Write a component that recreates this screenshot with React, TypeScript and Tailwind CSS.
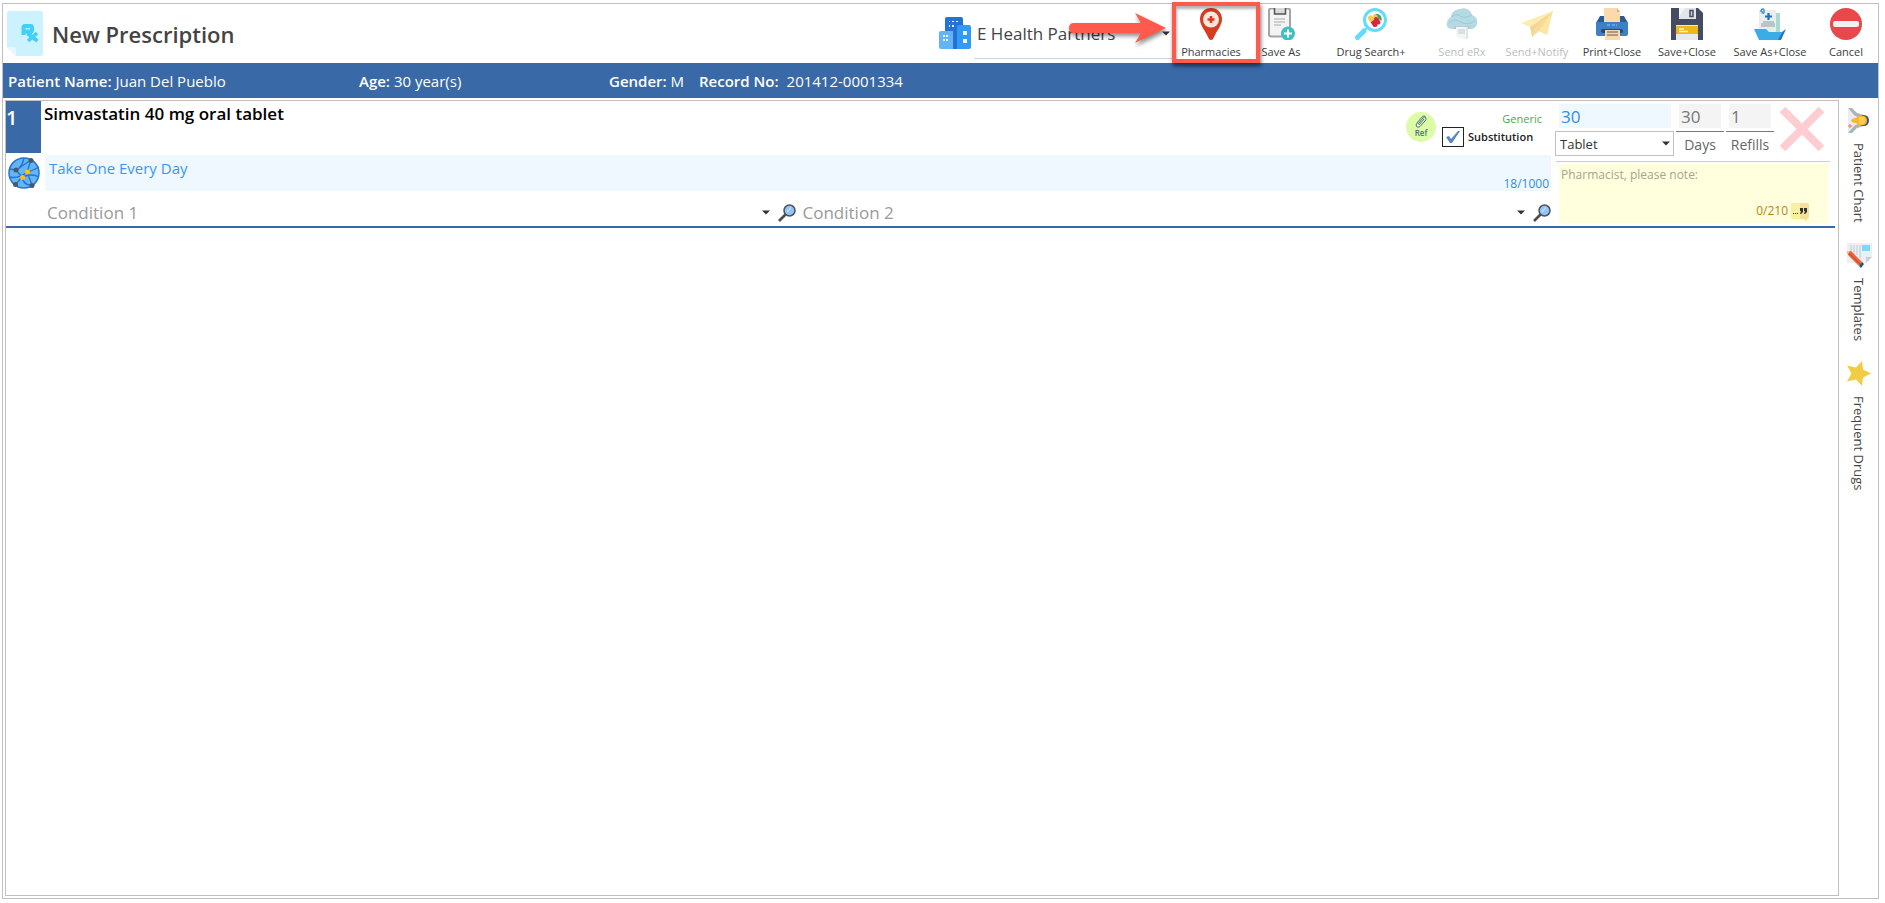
import React from 'react';

type IconProps = { className?: string };

const PrescriptionIcon: React.FC = () => (
  <svg width="36" height="45" viewBox="0 0 36 45" aria-hidden="true">
    <path d="M2 0H34Q36 0 36 2V43Q36 45 34 45H9L0 36V2Q0 0 2 0Z" fill="#ccf2ff" />
    <path d="M0 36H7Q9 36 9 38V45Z" fill="#e8f9ff" />
    <path d="M16.500 24V16.500Q16.500 15 18 15H23.500Q25 15 25 16.500V19Q25 20.500 23.500 20.500H17M21 21L24 24" fill="none" stroke="#40cfff" strokeWidth="4" />
    <path d="M21 30L30 22M20.500 22.500L30.500 30" fill="none" stroke="#40cfff" strokeWidth="3.600" />
  </svg>
);

const BuildingIcon: React.FC = () => (
  <svg width="32" height="32" viewBox="0 0 32 32" aria-hidden="true">
    <path d="M6 2Q6 0 8 0H22Q24 0 24 2V32H6Z" fill="#2472d2" />
    <path d="M18 10Q18 8 20 8H30Q32 8 32 10V30Q32 32 30 32H18Z" fill="#3399f5" />
    <path d="M0 16Q0 14 2 14H14V32H2Q0 32 0 30Z" fill="#64b5f8" />
    <path d="M10 4h1v1h-1zM13 4h2v1h-2zM17 4h2v1h-2zM10 8h1v2h-1zM13 8h2v2h-2zM4 18h2v2h-2zM7 18h2v2h-2zM4 22h2v2h-2zM7 22h2v2h-2zM24 14h4v4h-4zM24 22h4v4h-4z" fill="#e9f5ff" />
  </svg>
);

const PinIcon: React.FC = () => (
  <svg width="32" height="32" viewBox="0 0 32 32" aria-hidden="true">
    <path d="M16 0C9.500 0 5 4.800 5 11C5 17 9 21 12 27L14 31Q16 33 18 31L20 27C23 21 27 17 27 11C27 4.800 22.500 0 16 0Z" fill="#d73b20" />
    <circle cx="16" cy="11.500" r="8" fill="#f5e9de" />
    <path d="M16 8V15M12.500 11.500H19.500" stroke="#d73b20" strokeWidth="2.600" />
  </svg>
);

const ClipboardIcon: React.FC = () => (
  <svg width="32" height="32" viewBox="0 0 32 32" aria-hidden="true">
    <rect x="4" y="0.500" width="21" height="28" rx="2" fill="#f3f3f3" stroke="#a3a3a3" strokeWidth="2" />
    <path d="M9.500 0V6H20.500V0" fill="#d9d9d9" stroke="#555" strokeWidth="1.500" />
    <path d="M9 11H20M9 14H20M9 17H16" stroke="#aaa" strokeWidth="1" />
    <circle cx="23" cy="25.500" r="7" fill="#40bfc1" />
    <path d="M23 21.500V29.500M19 25.500H27" stroke="#fff" strokeWidth="2" />
  </svg>
);

const DrugSearchIcon: React.FC = () => (
  <svg width="32" height="32" viewBox="0 0 32 32" aria-hidden="true">
    <path d="M2.500 29.500L9 23" stroke="#62dcfb" strokeWidth="5" strokeLinecap="round" />
    <path d="M9 23L13 19" stroke="#62dcfb" strokeWidth="2" />
    <circle cx="20" cy="12" r="10.500" fill="#fff" stroke="#62dcfb" strokeWidth="3" />
    <path d="M20 6C24 5 27.500 8 26.500 13L22 10Z" fill="#3aa667" />
    <path d="M15.500 10L17 12" stroke="#f9c846" strokeWidth="5" strokeLinecap="round" />
    <path d="M20 8L21 10" stroke="#f9c846" strokeWidth="4" strokeLinecap="round" />
    <path d="M17.500 13L20 16" stroke="#d52740" strokeWidth="5" strokeLinecap="butt" />
    <circle cx="20" cy="16.500" r="2.500" fill="#d52740" />
    <path d="M21 11L23.500 14.500" stroke="#d52740" strokeWidth="4" strokeLinecap="round" />
  </svg>
);

const CloudPrintIcon: React.FC = () => (
  <svg width="32" height="32" viewBox="0 0 32 32" aria-hidden="true">
    <path d="M6 21C2 21 0 18 1 15C1 12 3 10 5 9C5 5 9 1 14 1C19-1 25 2 26 7C30 8 32 12 31 16C30 20 27 21 25 21Z" fill="#b5dae4" />
    <path d="M5 9Q10 5 14 8T26 7M3 15Q9 10 15 14T29 13" fill="none" stroke="#9ccad8" strokeWidth="1" />
    <path d="M8 18H24V21H8Z" fill="#b9c9d0" />
    <path d="M10 19H22V31H14L10 28Z" fill="#f2f6f7" />
    <path d="M12 21H19V26H12Z" fill="#dadfe2" />
    <path d="M22 19V31L20 31V19Z" fill="#dfe6e9" />
  </svg>
);

const PaperPlaneIcon: React.FC = () => (
  <svg width="32" height="32" viewBox="0 0 32 32" aria-hidden="true">
    <path d="M32 3L0 15L9 19Z" fill="#fdebb0" />
    <path d="M32 3L13 21L26 27Z" fill="#fbe6a2" />
    <path d="M32 3L9 19L11 29Z" fill="#f1d791" />
    <path d="M32 3L13 21L11 29L18 23Z" fill="#f6dc98" />
  </svg>
);

const PrinterIcon: React.FC = () => (
  <svg width="32" height="32" viewBox="0 0 32 32" aria-hidden="true">
    <path d="M4 8H28L32 15H0Z" fill="#2c5b94" />
    <path d="M8 1Q8 0 9 0H21L24 4V14H8Z" fill="#fbd9ae" />
    <path d="M21 0V4H24" fill="#e8ae70" />
    <path d="M0 14H32V26Q32 28 30 28H2Q0 28 0 26Z" fill="#3f7fc4" />
    <path d="M11 17H14M16 17H19M20 17H21" stroke="#9cc4ef" strokeWidth="1" />
    <rect x="5" y="21" width="22" height="4" rx="2" fill="#26476f" />
    <path d="M9 22H24V32H9Z" fill="#fbd9ae" />
    <path d="M11 24H22M11 27H22" stroke="#64564a" strokeWidth="1" />
  </svg>
);

const FloppyIcon: React.FC = () => (
  <svg width="32" height="32" viewBox="0 0 32 32" aria-hidden="true">
    <path d="M0 0H27L32 5V32H0Z" fill="#444b63" />
    <path d="M8 0H25V11H8Z" fill="#e1e5e7" />
    <path d="M8 0H14L8 9Z" fill="#f2f4f5" />
    <path d="M19 2.500H22V8.500H19Z" fill="#cdd3d5" stroke="#444b63" strokeWidth="1.500" />
    <path d="M5 17H27V32H5Z" fill="#e6eaec" />
    <path d="M5 18H27V26H5Z" fill="#edb917" />
    <path d="M8 21H13M8 23.500H17" stroke="#fff4c9" strokeWidth="1.400" />
  </svg>
);

const FolderPlusIcon: React.FC = () => (
  <svg width="32" height="32" viewBox="0 0 32 32" aria-hidden="true">
    <path d="M14 5H26V29H14Z" fill="#a9d9cf" />
    <path d="M5 2H22V28H5Z" fill="#e9edef" />
    <path d="M7 16H21M7 18H21M9 14H20" stroke="#8c9aa2" strokeWidth="1" />
    <path d="M14.500 5V12M11 8.500H18" stroke="#1f70bd" strokeWidth="2.200" />
    <path d="M7 4C7 0 11 0 10 4C10 6 8 6 8 3" fill="none" stroke="#3b8ed8" strokeWidth="1.400" />
    <path d="M0 21H12L15 24H28L25 32H5Z" fill="#3bade6" />
    <path d="M28 24L32 21L27 32H24Z" fill="#2177bd" />
  </svg>
);

const CancelIcon: React.FC = () => (
  <svg width="32" height="32" viewBox="0 0 32 32" aria-hidden="true">
    <circle cx="16" cy="16" r="16" fill="#e8474b" />
    <rect x="3" y="13" width="26" height="6" rx="2" fill="#f3f0f0" />
  </svg>
);

const NetworkIcon: React.FC = () => (
  <svg width="32" height="32" viewBox="0 0 32 32" aria-hidden="true">
    <circle cx="16" cy="16" r="15" fill="#64b5f6" stroke="#2674cf" strokeWidth="1.500" />
    <path d="M1 12L8 13L23 3M8 13Q14 11 16 1M8 13L14 20L8 27M19 15L24 28M1 20Q11 22 19 15Q24 14 31 10M19 15L23 3M14 20Q24 16 31 20M14 20Q16 29 24 28" fill="none" stroke="#2674cf" strokeWidth="1.400" />
    <g fill="#455a64"><circle cx="23" cy="3.500" r="2.500" /><circle cx="8" cy="13" r="2.500" /><circle cx="7.500" cy="27.500" r="2.500" /><circle cx="24" cy="28.500" r="2.500" /></g>
    <g fill="#ffc107"><circle cx="19.500" cy="15" r="2.500" /><circle cx="14.500" cy="20.500" r="2.500" /></g>
  </svg>
);

const SearchIcon: React.FC = () => (
  <svg width="18" height="18" viewBox="0 0 18 18" aria-hidden="true">
    <path d="M1 17L7.500 10.500" stroke="#4c4c4c" strokeWidth="2.600" />
    <circle cx="11.500" cy="6.500" r="5.500" fill="#8fc4ff" stroke="#515151" strokeWidth="1.500" />
    <path d="M9 8L13 3.500" stroke="#c5e1ff" strokeWidth="1.200" />
  </svg>
);

const Caret: React.FC<IconProps> = ({ className = '' }) => (
  <svg className={className} width="8" height="5" viewBox="0 0 8 5" aria-hidden="true">
    <path d="M0 0.500H8L4 4.500Z" fill="#333" />
  </svg>
);

const ChartPersonIcon: React.FC = () => (
  <svg width="24" height="25" viewBox="0 0 24 25" aria-hidden="true">
    <path d="M1 1L10 7L9 19L1 25Z" fill="#e9edf0" />
    <path d="M1 0H5L10 5L17 7L18 10L12 10L7 7Z" fill="#aab4ba" />
    <path d="M1 25H5L10 20L17 18L18 15L12 15L7 18Z" fill="#aab4ba" />
    <ellipse cx="17" cy="12.500" rx="5" ry="5.500" fill="#3f5666" />
    <path d="M4 12.500Q5 10 9 10L11 8H17Q20 9 20 12.500Q20 16 17 17H11L9 15Q5 15 4 12.500Z" fill="#fbb62b" />
    <path d="M12 9H17Q19 12 17 16H12Z" fill="#ffd05c" />
    <path d="M3 16V20M1 18H5" stroke="#ee7868" strokeWidth="1" />
  </svg>
);

const TemplateIcon: React.FC = () => (
  <svg width="25" height="25" viewBox="0 0 25 25" aria-hidden="true">
    <path d="M0 0H25V14L19 20H0Z" fill="#edf0f3" />
    <path d="M19 20V14H25Z" fill="#c7ced8" />
    <path d="M4 2V9M7 2V12M10 2V12M13 2V15" stroke="#c9d2dc" strokeWidth="1.300" />
    <path d="M15 2H23V8H15Z" fill="#7bd7ff" />
    <path d="M0 8L4 8L15 19L12 23L1 12Z" fill="#f0653e" />
    <path d="M2 10L13 21" stroke="#cf4c2f" strokeWidth="1.200" />
    <path d="M12 23L15 19L17 21L14 25Z" fill="#38505e" />
    <path d="M0 8H3L1 11Z" fill="#f8c89a" />
  </svg>
);

const StarIcon: React.FC = () => (
  <svg width="24" height="25" viewBox="0 0 24 25" aria-hidden="true">
    <path d="M24 12.500L16 16.500L15 25L9 18.500L0 20.500L4.500 12.500L0 4.500L9 6.500L15 0L16 8.500Z" fill="#f0cd43" />
  </svg>
);

const tools = [
  { label: 'Pharmacies', icon: <PinIcon />, width: 'w-[74px]', marked: true },
  { label: 'Save As', icon: <ClipboardIcon />, width: 'w-[66px]' },
  { label: 'Drug Search+', icon: <DrugSearchIcon />, width: 'w-[114px]' },
  { label: 'Send eRx', icon: <CloudPrintIcon />, width: 'w-[68px]', disabled: true },
  { label: 'Send+Notify', icon: <PaperPlaneIcon />, width: 'w-[82px]', disabled: true },
  { label: 'Print+Close', icon: <PrinterIcon />, width: 'w-[68px]' },
  { label: 'Save+Close', icon: <FloppyIcon />, width: 'w-[82px]' },
  { label: 'Save As+Close', icon: <FolderPlusIcon />, width: 'w-[84px]' },
  { label: 'Cancel', icon: <CancelIcon />, width: 'w-[66px] pl-0.5' },
];

const Callout: React.FC = () => (
  <>
    <span className="absolute -top-0.5 -left-0.5 w-[88px] h-[61px] border-4 border-[#ff5a4c] shadow-[1px_3px_4px_rgba(0,0,0,0.55),inset_1px_3px_3px_rgba(0,0,0,0.3)] z-10 pointer-events-none"></span>
    <svg className="absolute top-2 -left-[106px] z-10 pointer-events-none drop-shadow-[1px_3px_2px_rgba(0,0,0,0.45)]" width="100" height="34" viewBox="0 0 100 34" aria-hidden="true">
      <path d="M6 11H73L67 1L98 16L67 31L73 21H6Q1 21 1 16Q1 11 6 11Z" fill="#ff5a4c" />
    </svg>
  </>
);

const Toolbar: React.FC = () => (
  <header className="flex h-[59px] shrink-0 items-start">
    <div className="flex flex-1 items-center gap-[9px] pl-1 pt-[7px]">
      <PrescriptionIcon />
      <h1 className="text-[22px] leading-[30px] font-semibold text-[#444]">New Prescription</h1>
    </div>
    <div className="flex items-start gap-[3px]">
      <div className="pt-[13px]"><BuildingIcon /></div>
      <div className="relative flex h-[55px] w-[200px] items-center border-b border-[#ccd5d1] pt-1.5">
        <select aria-label="Pharmacy group" className="w-full appearance-none bg-transparent pl-[3px] text-[17px] leading-6 text-[#444] outline-none">
          <option>E Health Partners</option>
        </select>
        <Caret className="absolute right-1 top-[27px] pointer-events-none" />
      </div>
    </div>
    <nav className="flex" aria-label="Prescription actions">
      {tools.map((tool) => (
        <button
          key={tool.label}
          type="button"
          disabled={tool.disabled}
          className={`relative flex flex-col items-center gap-1 pt-1 ${tool.width} ${tool.disabled ? 'text-[#bcbcbc]' : 'text-[#3c3c3c]'}`}
        >
          {tool.icon}
          <span className="text-[11px] leading-4 whitespace-nowrap">{tool.label}</span>
          {tool.marked && <Callout />}
        </button>
      ))}
    </nav>
  </header>
);

const PatientBar: React.FC = () => (
  <div className="flex h-[35px] shrink-0 items-center bg-[#3969a7] pl-[5px] text-[15px] leading-5 text-white">
    <div className="w-[351px]"><b className="font-semibold">Patient Name:</b> Juan Del Pueblo</div>
    <div className="w-[250px]"><b className="font-semibold">Age:</b> 30 year(s)</div>
    <div className="w-[90px]"><b className="font-semibold">Gender:</b> M</div>
    <div><b className="mr-2 font-semibold">Record No:</b>201412-0001334</div>
  </div>
);

const Condition: React.FC<{ name: string }> = ({ name }) => (
  <div className="flex min-w-0 flex-1 items-center">
    <input aria-label={name} placeholder={name} className="min-w-0 flex-1 bg-transparent pl-0.5 text-[17px] leading-6 outline-none placeholder:text-[#9a9a9a]" />
    <button type="button" aria-label={`Open ${name} list`} className="flex w-5 justify-center"><Caret /></button>
    <button type="button" aria-label={`Search ${name}`} className="ml-0.5"><SearchIcon /></button>
  </div>
);

const Quantities: React.FC = () => (
  <div className="w-[284px] shrink-0 pl-1">
    <div className="flex h-[60px] items-start gap-0.5">
      <div className="w-[119px] pt-[3px]">
        <input aria-label="Quantity" defaultValue="30" className="ml-1 block h-6 w-[112px] bg-[#eff7ff] pt-0.5 pl-0.5 text-[17px] leading-6 text-[#2e8fe8] outline-none" />
        <div className="relative mt-[3px]">
          <select aria-label="Unit" className="block h-[25px] w-full appearance-none border border-[#c0c0c0] bg-white pl-1 text-[13px] leading-5 text-[#333] outline-none">
            <option>Tablet</option>
          </select>
          <Caret className="absolute right-1 top-2.5 pointer-events-none" />
        </div>
      </div>
      {[
        { label: 'Days', value: '30', id: 'days' },
        { label: 'Refills', value: '1', id: 'refills' },
      ].map((field) => (
        <div key={field.id} className="flex w-12 flex-col items-center pt-[3px]">
          <div className="w-full border-b border-[#777] px-[3px] pb-[3px]">
            <input id={field.id} defaultValue={field.value} className="block h-6 w-full bg-[#f4f4f4] pt-0.5 pl-0.5 text-[17px] leading-6 text-[#777] outline-none" />
          </div>
          <label htmlFor={field.id} className="mt-[3px] text-[14px] leading-5 text-[#666]">{field.label}</label>
        </div>
      ))}
      <button type="button" aria-label="Remove drug" className="mt-[5px] ml-[3px]">
        <svg width="46" height="46" viewBox="0 0 46 46" aria-hidden="true">
          <path d="M3.500 3.500L42.500 42.500M42.500 3.500L3.500 42.500" stroke="#fdcdd2" strokeWidth="8" />
        </svg>
      </button>
    </div>
    <div className="mr-[5px] ml-px border-t border-[#ffda1a] pt-0.5 pr-0.5 pl-[3px]">
      <div className="relative bg-[#fffedd]">
        <textarea aria-label="Note to pharmacist" placeholder="Pharmacist, please note:" className="block h-[59px] w-full resize-none bg-transparent px-0.5 pt-px text-[12px] leading-5 outline-none placeholder:text-[#a5a58f]" />
        <div className="absolute right-[19px] bottom-0.5 flex items-start gap-[3px]">
          <span className="text-[12px] leading-4 text-[#b8860b]">0/210</span>
          <button type="button" aria-label="Quick phrases" className="block">
            <svg width="18" height="18" viewBox="0 0 18 18" aria-hidden="true">
              <path d="M2 0H9V16H2Q0 16 0 14V2Q0 0 2 0Z" fill="#f5f19d" />
              <path d="M9 0H16Q18 0 18 2V14Q18 16 16 16V18L12 16H9Z" fill="#f6df9b" />
              <path d="M2 10h1v1h-1zM4 10h1v1h-1zM6 10h1v1h-1z" fill="#333" />
              <path d="M9 5H12V9L10 11H9L10 8H9ZM13 5H16V9L14 11H13L14 8H13Z" fill="#333" />
            </svg>
          </button>
        </div>
      </div>
    </div>
  </div>
);

const DrugItem: React.FC = () => (
  <article className="mr-[3px] flex border-b-2 border-[#3969a7]">
    <div className="min-w-0 flex-1">
      <div className="flex h-[52px]">
        <div className="w-[35px] pt-1 text-[20px] leading-[26px] font-semibold text-white bg-[#3969a7]">1</div>
        <h2 className="flex-1 pl-[3px] text-[17px] leading-[26px] font-semibold text-black">Simvastatin 40 mg oral tablet</h2>
        <button type="button" className="mt-[11px] mr-1.5 flex h-[30px] w-[30px] flex-col items-center rounded-full bg-[#dcfca5] pt-[3px] text-[#51708a]">
          <svg width="12" height="13" viewBox="0 0 12 13" fill="none" stroke="currentColor" strokeWidth="1" aria-hidden="true">
            <path d="M3 9L8 3Q10 1 11 3Q11.500 4 10 6L5 11.500Q3 13 1.500 11.500Q0.500 10 2 8L7 2Q9 0 10.500 1.500M4 10L9 4" />
          </svg>
          <span className="text-[8px] leading-[10px] font-semibold">Ref</span>
        </button>
        <div className="flex w-[109px] flex-col pt-2.5">
          <span className="pr-[9px] text-right text-[11px] leading-4 text-[#3fae49]">Generic</span>
          <label className="flex items-center gap-1 text-[11px] leading-5 font-semibold text-[#222]">
            <span className="relative block h-5 w-[22px]">
              <input type="checkbox" defaultChecked className="peer block h-5 w-[22px] appearance-none border border-[#222] bg-white" />
              <svg className="absolute top-1 left-1 hidden peer-checked:block pointer-events-none" width="14" height="12" viewBox="0 0 14 12" aria-hidden="true">
                <path d="M0 6L3 5L5 8L12 0H14L6 12H4Z" fill="#5b87c0" />
              </svg>
            </span>
            Substitution
          </label>
        </div>
      </div>
      <div className="mt-0.5 flex h-9">
        <button type="button" aria-label="Interactions" className="mt-0.5 mr-[5px] ml-0.5 h-8 w-8 shrink-0"><NetworkIcon /></button>
        <div className="relative flex-1 bg-[#eff7ff]">
          <input aria-label="Directions" defaultValue="Take One Every Day" className="block w-full bg-transparent pt-[3px] pl-1 text-[15px] leading-5 text-[#3a97f5] outline-none" />
          <span className="absolute right-0.5 bottom-0 text-[12px] leading-[15px] text-[#2e8fe8]">18/1000</span>
        </div>
      </div>
      <div className="flex h-[35px] items-center gap-[5px] pt-2 pl-[39px]">
        <Condition name="Condition 1" />
        <Condition name="Condition 2" />
      </div>
    </div>
    <Quantities />
  </article>
);

const SidePanel: React.FC = () => (
  <aside className="flex w-[39px] shrink-0 flex-col items-center gap-5 pt-2 pl-px">
    {[
      { label: 'Patient Chart', icon: <ChartPersonIcon /> },
      { label: 'Templates', icon: <TemplateIcon /> },
      { label: 'Frequent Drugs', icon: <StarIcon /> },
    ].map((tab) => (
      <button key={tab.label} type="button" className="flex flex-col items-center gap-[10px] text-[#444]">
        {tab.icon}
        <span className="text-[13px] leading-5 [writing-mode:vertical-rl]">{tab.label}</span>
      </button>
    ))}
  </aside>
);

export default function App() {
  return (
    <div className="h-screen overflow-hidden bg-white pt-[3px] pr-[6px] pb-1 pl-0.5 font-['Open_Sans','Noto_Sans',sans-serif]">
      <div className="flex h-full flex-col border border-[#c0c0c0]">
        <Toolbar />
        <PatientBar />
        <div className="flex min-h-0 flex-1 pt-0.5 pb-0.5 pl-0.5">
          <main className="min-w-0 flex-1 border border-[#c0c0c0]">
            <DrugItem />
          </main>
          <SidePanel />
        </div>
      </div>
    </div>
  );
}
